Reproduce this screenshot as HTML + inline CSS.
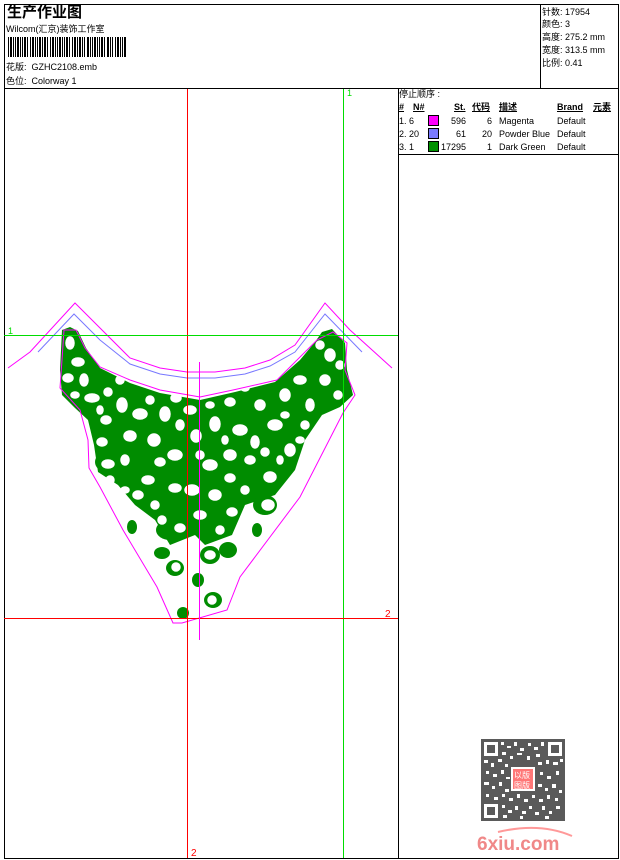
<!DOCTYPE html>
<html><head><meta charset="utf-8"><style>
body{margin:0;width:620px;height:860px;background:#fff;position:relative;overflow:hidden;font-family:"Liberation Sans","Noto Sans CJK SC",sans-serif;font-size:9px;color:#000}
.t{position:absolute;white-space:nowrap;line-height:10px}
.u{text-decoration:underline;font-weight:bold}
.sw{position:absolute;width:9px;height:9px;border:1px solid #000}
</style></head><body>
<svg width="620" height="860" style="position:absolute;left:0;top:0">
<g fill="none" stroke="#000" stroke-width="1">
<rect x="4.5" y="4.5" width="614" height="854"/>
<line x1="4" y1="88.5" x2="619" y2="88.5"/>
<line x1="540.5" y1="4" x2="540.5" y2="88"/>
<line x1="398.5" y1="88" x2="398.5" y2="858"/>
<line x1="398" y1="154.5" x2="619" y2="154.5"/>
</g>
<g fill="#000">
<rect x="8" y="37" width="1" height="20"/><rect x="10" y="37" width="2" height="20"/><rect x="13" y="37" width="1" height="20"/><rect x="15" y="37" width="1" height="20"/><rect x="17" y="37" width="2" height="20"/><rect x="20" y="37" width="1" height="20"/><rect x="22" y="37" width="1" height="20"/><rect x="24" y="37" width="2" height="20"/><rect x="27" y="37" width="1" height="20"/><rect x="30" y="37" width="1" height="20"/><rect x="32" y="37" width="2" height="20"/><rect x="35" y="37" width="1" height="20"/><rect x="37" y="37" width="1" height="20"/><rect x="39" y="37" width="2" height="20"/><rect x="42" y="37" width="1" height="20"/><rect x="44" y="37" width="2" height="20"/><rect x="47" y="37" width="1" height="20"/><rect x="50" y="37" width="1" height="20"/><rect x="52" y="37" width="2" height="20"/><rect x="55" y="37" width="1" height="20"/><rect x="57" y="37" width="1" height="20"/><rect x="59" y="37" width="2" height="20"/><rect x="62" y="37" width="1" height="20"/><rect x="64" y="37" width="1" height="20"/><rect x="66" y="37" width="2" height="20"/><rect x="69" y="37" width="1" height="20"/><rect x="72" y="37" width="1" height="20"/><rect x="74" y="37" width="2" height="20"/><rect x="77" y="37" width="1" height="20"/><rect x="79" y="37" width="2" height="20"/><rect x="82" y="37" width="1" height="20"/><rect x="84" y="37" width="1" height="20"/><rect x="87" y="37" width="2" height="20"/><rect x="90" y="37" width="1" height="20"/><rect x="92" y="37" width="1" height="20"/><rect x="94" y="37" width="2" height="20"/><rect x="97" y="37" width="1" height="20"/><rect x="99" y="37" width="1" height="20"/><rect x="101" y="37" width="2" height="20"/><rect x="104" y="37" width="1" height="20"/><rect x="107" y="37" width="2" height="20"/><rect x="110" y="37" width="1" height="20"/><rect x="112" y="37" width="1" height="20"/><rect x="115" y="37" width="1" height="20"/><rect x="117" y="37" width="2" height="20"/><rect x="120" y="37" width="1" height="20"/><rect x="122" y="37" width="1" height="20"/><rect x="124" y="37" width="2" height="20"/>
</g>
<polyline fill="none" stroke="#f0f" points="8,368 30,352 75,303 100,328 130,358 160,368 187,372 215,372 245,368 270,360 295,345 325,303 350,330 392,368"/>
<polyline fill="none" stroke="#77f" points="38,352 74,314 100,340 130,364 160,374 187,378 215,378 245,374 270,366 295,352 325,314 362,352"/>
<g fill="#008c00">
<polygon points="62,330 70,327 78,331 86,348 100,368 130,383 160,393 200,400 235,392 275,382 300,360 315,342 322,332 332,329 345,343 347,370 353,395 340,407 322,415 305,440 295,470 275,495 245,505 232,535 205,545 195,535 170,545 155,520 135,505 118,485 98,472 94,445 88,420 75,408 62,395 60,370"/>
<ellipse cx="187" cy="500" rx="20" ry="14"/>
<ellipse cx="132" cy="527" rx="5" ry="7"/>
<ellipse cx="162" cy="553" rx="8" ry="6"/>
<ellipse cx="175" cy="568" rx="9" ry="8"/>
<ellipse cx="170" cy="530" rx="14" ry="10"/>
<ellipse cx="210" cy="555" rx="10" ry="9"/>
<ellipse cx="228" cy="550" rx="9" ry="8"/>
<ellipse cx="198" cy="580" rx="6" ry="7"/>
<ellipse cx="213" cy="600" rx="9" ry="8"/>
<ellipse cx="183" cy="613" rx="6" ry="6"/>
<ellipse cx="257" cy="530" rx="5" ry="7"/>
<ellipse cx="265" cy="505" rx="12" ry="10"/>
<ellipse cx="107" cy="462" rx="12" ry="10"/>
<ellipse cx="143" cy="487" rx="14" ry="10"/>
</g>
<g fill="#fff" stroke="#fff" stroke-width="3.5">
<ellipse cx="70" cy="343" rx="3" ry="5"/><ellipse cx="78" cy="362" rx="5" ry="3"/><ellipse cx="68" cy="378" rx="4" ry="3"/><ellipse cx="84" cy="380" rx="3" ry="5"/>
<ellipse cx="92" cy="398" rx="6" ry="3"/><ellipse cx="108" cy="392" rx="3" ry="3"/><ellipse cx="122" cy="405" rx="4" ry="6"/><ellipse cx="106" cy="420" rx="4" ry="3"/>
<ellipse cx="140" cy="414" rx="6" ry="4"/><ellipse cx="130" cy="436" rx="5" ry="4"/><ellipse cx="154" cy="440" rx="5" ry="5"/><ellipse cx="165" cy="414" rx="4" ry="6"/>
<ellipse cx="102" cy="442" rx="4" ry="3"/><ellipse cx="108" cy="464" rx="5" ry="3"/><ellipse cx="176" cy="398" rx="4" ry="3"/><ellipse cx="190" cy="410" rx="5" ry="3"/>
<ellipse cx="196" cy="436" rx="4" ry="5"/><ellipse cx="175" cy="455" rx="6" ry="4"/><ellipse cx="215" cy="424" rx="4" ry="6"/><ellipse cx="230" cy="402" rx="4" ry="3"/>
<ellipse cx="240" cy="430" rx="6" ry="4"/><ellipse cx="260" cy="405" rx="4" ry="4"/><ellipse cx="255" cy="442" rx="3" ry="5"/><ellipse cx="275" cy="425" rx="6" ry="4"/>
<ellipse cx="285" cy="395" rx="4" ry="5"/><ellipse cx="300" cy="380" rx="5" ry="3"/><ellipse cx="310" cy="405" rx="3" ry="5"/><ellipse cx="325" cy="380" rx="4" ry="4"/>
<ellipse cx="330" cy="355" rx="4" ry="5"/><ellipse cx="320" cy="345" rx="3" ry="3"/><ellipse cx="338" cy="395" rx="3" ry="3"/><ellipse cx="290" cy="450" rx="4" ry="5"/>
<ellipse cx="270" cy="477" rx="5" ry="4"/><ellipse cx="250" cy="460" rx="4" ry="3"/><ellipse cx="230" cy="455" rx="5" ry="4"/><ellipse cx="210" cy="465" rx="6" ry="4"/>
<ellipse cx="192" cy="490" rx="6" ry="4"/><ellipse cx="175" cy="488" rx="5" ry="3"/><ellipse cx="148" cy="480" rx="5" ry="3"/><ellipse cx="138" cy="495" rx="4" ry="3"/>
<ellipse cx="215" cy="495" rx="5" ry="4"/><ellipse cx="232" cy="512" rx="4" ry="3"/><ellipse cx="220" cy="530" rx="3" ry="3"/><ellipse cx="200" cy="515" rx="5" ry="3"/>
<ellipse cx="180" cy="528" rx="4" ry="3"/><ellipse cx="162" cy="520" rx="3" ry="3"/><ellipse cx="176" cy="567" rx="3" ry="3"/><ellipse cx="212" cy="600" rx="3" ry="3"/>
<ellipse cx="210" cy="555" rx="4" ry="3"/><ellipse cx="120" cy="380" rx="3" ry="3"/><ellipse cx="150" cy="400" rx="3" ry="3"/><ellipse cx="210" cy="405" rx="3" ry="2"/>
<ellipse cx="245" cy="388" rx="3" ry="2"/><ellipse cx="265" cy="452" rx="3" ry="3"/><ellipse cx="268" cy="505" rx="5" ry="4"/><ellipse cx="160" cy="462" rx="4" ry="3"/>
<ellipse cx="200" cy="455" rx="3" ry="3"/><ellipse cx="230" cy="478" rx="4" ry="3"/><ellipse cx="125" cy="460" rx="3" ry="4"/><ellipse cx="305" cy="425" rx="3" ry="3"/>
<ellipse cx="75" cy="395" rx="3" ry="2"/><ellipse cx="340" cy="365" rx="3" ry="3"/><ellipse cx="285" cy="415" rx="3" ry="2"/><ellipse cx="180" cy="425" rx="3" ry="4"/>
<ellipse cx="110" cy="480" rx="3" ry="3"/><ellipse cx="125" cy="490" rx="3" ry="2"/><ellipse cx="155" cy="505" rx="3" ry="3"/><ellipse cx="245" cy="490" rx="3" ry="3"/><ellipse cx="280" cy="460" rx="2" ry="3"/><ellipse cx="300" cy="440" rx="3" ry="2"/><ellipse cx="100" cy="410" rx="2" ry="3"/><ellipse cx="225" cy="440" rx="2" ry="3"/>
</g>
<polygon fill="none" stroke="#f0f" points="64,330 76,330 85,348 100,367 130,380 160,390 200,397 233,390 277,380 317,340 333,332 347,343 345,370 355,395 343,413 300,497 240,577 227,610 182,623 173,623 157,587 123,530 100,487 89,468 88,440 80,410 60,388 62,360"/>
<line x1="187.5" y1="89" x2="187.5" y2="858" stroke="#f00"/>
<line x1="343.5" y1="89" x2="343.5" y2="858" stroke="#0d0"/>
<line x1="4" y1="335.5" x2="398" y2="335.5" stroke="#0d0"/>
<line x1="4" y1="618.5" x2="398" y2="618.5" stroke="#f00"/>
<line x1="199.5" y1="362" x2="199.5" y2="640" stroke="#f0f"/>
<text x="347" y="96" fill="#0d0" font-size="9" font-family="Liberation Sans">1</text>
<text x="8" y="334" fill="#0d0" font-size="9" font-family="Liberation Sans">1</text>
<text x="385" y="617" fill="#f00" font-size="10" font-family="Liberation Sans">2</text>
<text x="191" y="856" fill="#f00" font-size="10" font-family="Liberation Sans">2</text>
<rect x="481" y="739" width="84" height="82" fill="#5a5a5a"/>
<g fill="#fff">
<rect x="484" y="742" width="14" height="14"/><rect x="548" y="742" width="14" height="14"/><rect x="484" y="804" width="14" height="14"/>
<rect x="501" y="742" width="3" height="3"/><rect x="507" y="746" width="4" height="2"/><rect x="514" y="742" width="3" height="4"/><rect x="520" y="748" width="4" height="3"/><rect x="528" y="743" width="3" height="3"/><rect x="534" y="747" width="4" height="3"/><rect x="541" y="742" width="3" height="4"/>
<rect x="502" y="752" width="4" height="3"/><rect x="510" y="756" width="3" height="3"/><rect x="517" y="753" width="5" height="2"/><rect x="527" y="756" width="3" height="4"/><rect x="536" y="754" width="4" height="3"/>
<rect x="484" y="760" width="4" height="3"/><rect x="491" y="763" width="3" height="4"/><rect x="498" y="759" width="4" height="3"/><rect x="505" y="764" width="3" height="3"/><rect x="538" y="762" width="4" height="3"/><rect x="546" y="760" width="3" height="4"/><rect x="553" y="762" width="5" height="3"/><rect x="560" y="759" width="3" height="3"/>
<rect x="486" y="771" width="3" height="3"/><rect x="493" y="774" width="4" height="3"/><rect x="501" y="770" width="3" height="4"/><rect x="506" y="777" width="4" height="2"/><rect x="540" y="772" width="3" height="3"/><rect x="547" y="776" width="4" height="3"/><rect x="556" y="771" width="3" height="4"/>
<rect x="484" y="782" width="5" height="3"/><rect x="492" y="786" width="3" height="3"/><rect x="499" y="782" width="3" height="4"/><rect x="505" y="789" width="4" height="3"/><rect x="538" y="784" width="4" height="3"/><rect x="545" y="788" width="3" height="3"/><rect x="552" y="784" width="4" height="4"/><rect x="559" y="790" width="3" height="3"/>
<rect x="486" y="794" width="3" height="3"/><rect x="494" y="797" width="4" height="3"/><rect x="502" y="794" width="3" height="3"/><rect x="509" y="798" width="4" height="3"/><rect x="517" y="794" width="3" height="4"/><rect x="524" y="799" width="4" height="3"/><rect x="532" y="795" width="3" height="3"/><rect x="539" y="799" width="4" height="3"/><rect x="547" y="795" width="3" height="4"/><rect x="555" y="798" width="3" height="3"/>
<rect x="502" y="805" width="3" height="3"/><rect x="508" y="810" width="4" height="3"/><rect x="515" y="806" width="3" height="4"/><rect x="522" y="811" width="4" height="3"/><rect x="529" y="806" width="3" height="3"/><rect x="535" y="812" width="4" height="3"/><rect x="542" y="806" width="3" height="4"/><rect x="549" y="811" width="3" height="3"/><rect x="556" y="806" width="4" height="3"/><rect x="503" y="815" width="4" height="3"/><rect x="520" y="816" width="3" height="3"/><rect x="545" y="816" width="4" height="3"/>
</g>
<g fill="#5a5a5a"><rect x="487" y="745" width="8" height="8"/><rect x="551" y="745" width="8" height="8"/><rect x="487" y="807" width="8" height="8"/></g>
<rect x="511" y="767" width="24" height="24" fill="#fff"/>
<rect x="513" y="769" width="20" height="20" fill="#f77"/>
<text x="514" y="778" font-size="8" fill="#fff" font-family="Noto Sans CJK SC">以版</text>
<text x="514" y="788" font-size="8" fill="#fff" font-family="Noto Sans CJK SC">图版</text>
<path d="M498 832 Q540 822 572 836" stroke="#f99" stroke-width="2" fill="none"/>
<text x="477" y="850" font-size="19" font-weight="bold" fill="#f08888" font-family="Liberation Sans">6xiu.com</text>
</svg>
<div class="t" style="left:7px;top:4px;font-size:15px;line-height:17px;font-weight:bold">生产作业图</div>
<div class="t" style="left:6px;top:24px">Wilcom(汇京)装饰工作室</div>
<div class="t" style="left:6px;top:62px">花版:&nbsp; GZHC2108.emb</div>
<div class="t" style="left:6px;top:76px">色位:&nbsp; Colorway 1</div>
<div class="t" style="left:542px;top:7px">针数: 17954</div>
<div class="t" style="left:542px;top:19px">颜色: 3</div>
<div class="t" style="left:542px;top:32px">高度: 275.2 mm</div>
<div class="t" style="left:542px;top:45px">宽度: 313.5 mm</div>
<div class="t" style="left:542px;top:58px">比例: 0.41</div>
<div class="t" style="left:399px;top:89px">停止顺序 :</div>
<div class="t u" style="left:399px;top:102px">#</div>
<div class="t u" style="left:413px;top:102px">N#</div>
<div class="t u" style="left:454px;top:102px">St.</div>
<div class="t u" style="left:472px;top:102px">代码</div>
<div class="t u" style="left:499px;top:102px">描述</div>
<div class="t u" style="left:557px;top:102px">Brand</div>
<div class="t u" style="left:593px;top:102px">元素</div>
<div class="t" style="left:399px;top:116px">1. 6</div>
<div class="sw" style="left:428px;top:115px;background:#f0f"></div>
<div class="t" style="left:440px;top:116px;width:26px;text-align:right">596</div>
<div class="t" style="left:470px;top:116px;width:22px;text-align:right">6</div>
<div class="t" style="left:499px;top:116px">Magenta</div>
<div class="t" style="left:557px;top:116px">Default</div>
<div class="t" style="left:399px;top:129px">2. 20</div>
<div class="sw" style="left:428px;top:128px;background:#7b7bff"></div>
<div class="t" style="left:440px;top:129px;width:26px;text-align:right">61</div>
<div class="t" style="left:470px;top:129px;width:22px;text-align:right">20</div>
<div class="t" style="left:499px;top:129px">Powder Blue</div>
<div class="t" style="left:557px;top:129px">Default</div>
<div class="t" style="left:399px;top:142px">3. 1</div>
<div class="sw" style="left:428px;top:141px;background:#009000"></div>
<div class="t" style="left:440px;top:142px;width:26px;text-align:right">17295</div>
<div class="t" style="left:470px;top:142px;width:22px;text-align:right">1</div>
<div class="t" style="left:499px;top:142px">Dark Green</div>
<div class="t" style="left:557px;top:142px">Default</div>
</body></html>
